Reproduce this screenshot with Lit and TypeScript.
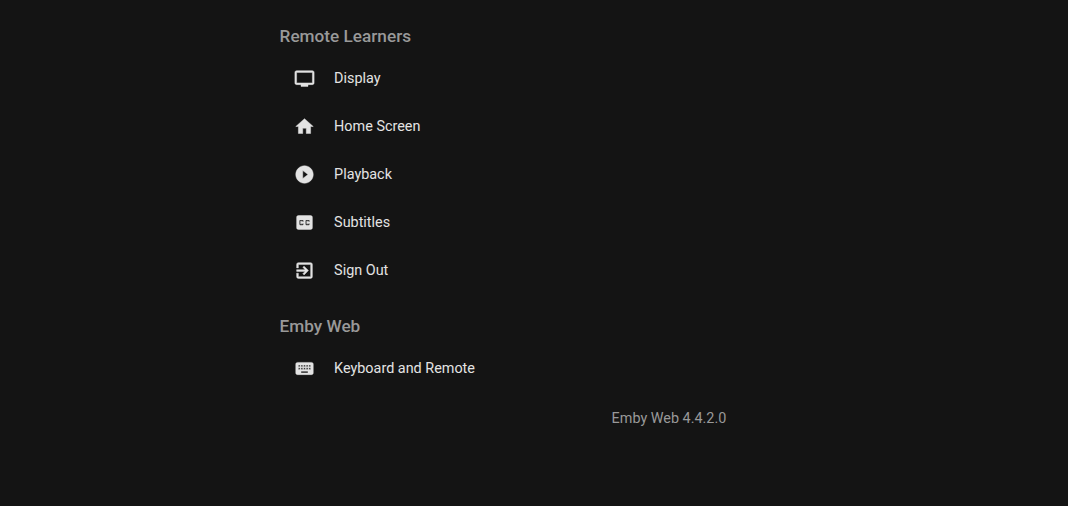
import { LitElement, html, css, svg } from "lit";
import { customElement } from "lit/decorators.js";

const ICONS: Record<string, string> = {
  tv: "M21 3H3c-1.1 0-2 .9-2 2v12c0 1.1.9 2 2 2h5v2h8v-2h5c1.1 0 1.99-.9 1.99-2L23 5c0-1.1-.9-2-2-2zm0 14H3V5h18v12z",
  home: "M10 20v-6h4v6h5v-8h3L12 3 2 12h3v8z",
  play: "M12 2C6.48 2 2 6.48 2 12s4.48 10 10 10 10-4.48 10-10S17.52 2 12 2zm-2 14.5v-9l6 4.5-6 4.5z",
  cc: "M19 4H5c-1.11 0-2 .9-2 2v12c0 1.1.89 2 2 2h14c1.1 0 2-.9 2-2V6c0-1.1-.9-2-2-2zm-8 7H9.5v-.5h-2v3h2V13H11v1c0 .55-.45 1-1 1H7c-.55 0-1-.45-1-1v-4c0-.55.45-1 1-1h3c.55 0 1 .45 1 1v1zm7 0h-1.5v-.5h-2v3h2V13H18v1c0 .55-.45 1-1 1h-3c-.55 0-1-.45-1-1v-4c0-.55.45-1 1-1h3c.55 0 1 .45 1 1v1z",
  exit: "M10.09 15.59L11.5 17l5-5-5-5-1.41 1.41L12.67 11H3v2h9.67l-2.58 2.59zM19 3H5c-1.11 0-2 .9-2 2v4h2V5h14v14H5v-4H3v4c0 1.1.89 2 2 2h14c1.1 0 2-.9 2-2V5c0-1.1-.9-2-2-2z",
  keyboard: "M20 5H4c-1.1 0-1.99.9-1.99 2L2 17c0 1.1.9 2 2 2h16c1.1 0 2-.9 2-2V7c0-1.1-.9-2-2-2zm-9 3h2v2h-2V8zm0 3h2v2h-2v-2zM8 8h2v2H8V8zm0 3h2v2H8v-2zm-1 2H5v-2h2v2zm0-3H5V8h2v2zm9 7H8v-2h8v2zm0-4h-2v-2h2v2zm0-3h-2V8h2v2zm3 3h-2v-2h2v2zm0-3h-2V8h2v2z",
};

const SECTIONS = [
  {
    title: "Remote Learners",
    items: [
      ["tv", "Display"],
      ["home", "Home Screen"],
      ["play", "Playback"],
      ["cc", "Subtitles"],
      ["exit", "Sign Out"],
    ],
  },
  { title: "Emby Web", items: [["keyboard", "Keyboard and Remote"]] },
];

@customElement("app-root")
export class AppRoot extends LitElement {
  static styles = css`
    :host {
      display: block;
      height: 506px;
      background: #141414;
      font-family: Roboto, "Liberation Sans", sans-serif;
      overflow: hidden;
    }
    .page {
      padding: 24px 0 0 279.6px;
    }
    .section {
      display: flex;
      flex-direction: column;
    }
    .section + .section {
      margin-top: 20px;
    }
    h2 {
      margin: 0 0 6px;
      font-size: 17.2px;
      line-height: 24px;
      font-weight: 500;
      color: #999;
    }
    .row {
      display: flex;
      align-items: center;
      height: 48px;
      padding-left: 14px;
      gap: 19.5px;
      font-size: 14.4px;
      color: #e3e3e3;
    }
    svg {
      width: 21px;
      height: 21px;
      fill: #e3e3e3;
      stroke: #e3e3e3;
      stroke-width: 0.5;
      flex: none;
    }
    .version {
      margin: 15px 0 0 332px;
      font-size: 14.4px;
      line-height: 24px;
      color: #999;
    }
  `;

  render() {
    return html`<div class="page">
      ${SECTIONS.map(
        (s) => html`<section class="section">
          <h2>${s.title}</h2>
          ${s.items.map(
            ([icon, label]) => html`<div class="row">
              <svg viewBox="0 0 24 24">${svg`<path d=${ICONS[icon]}></path>`}</svg>
              <span>${label}</span>
            </div>`
          )}
        </section>`
      )}
      <div class="version">Emby Web 4.4.2.0</div>
    </div>`;
  }
}
